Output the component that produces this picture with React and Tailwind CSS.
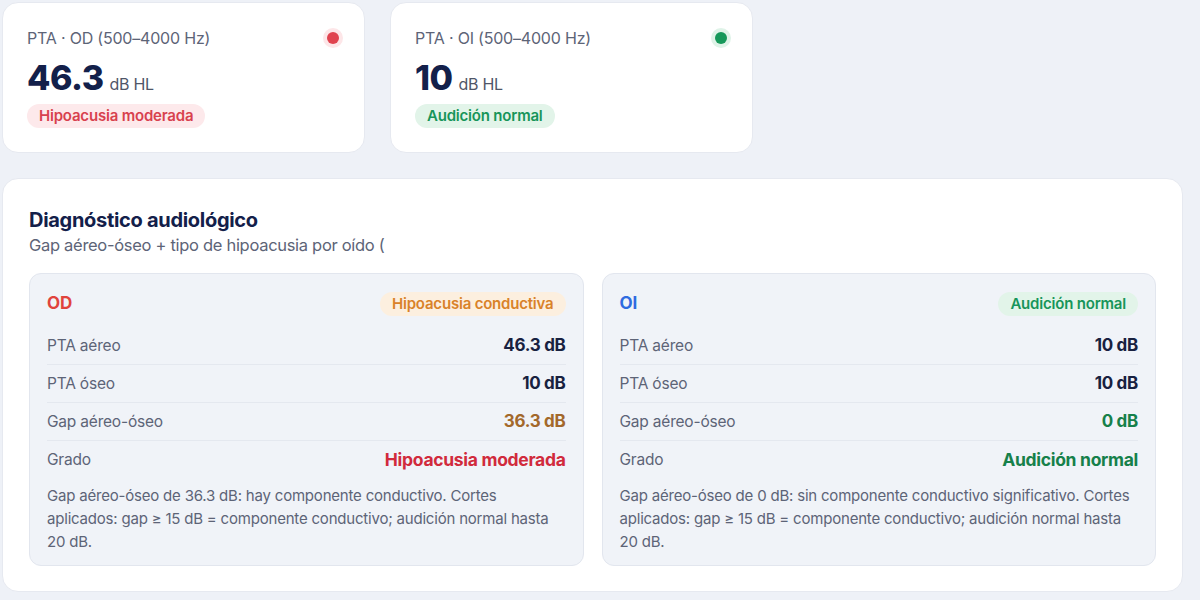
import React from "react";

const font = { fontFamily: "Inter, 'Noto Sans', sans-serif" };

function TopCard({ label, value, badge, tone }) {
  const dot = tone === "red" ? "bg-[#e0434f] ring-[#fde6e8]" : "bg-[#16985a] ring-[#dff3e8]";
  const badgeCls = tone === "red" ? "bg-[#fde9eb] text-[#d8414e]" : "bg-[#e2f4e9] text-[#17955a]";
  return (
    <div className="w-[363px] h-[151px] bg-white rounded-[16px] border border-[#e6e9f0] pl-6 pr-[21px] pt-[24px] flex flex-col">
      <div className="flex items-center justify-between">
        <span className="text-[16px] leading-[22px] text-[#5d6477] tracking-[-0.2px]">{label}</span>
        <span className="w-5 h-5 flex items-center justify-center">
          <span className={`w-3 h-3 rounded-full ring-4 ${dot}`} />
        </span>
      </div>
      <div className="flex items-baseline gap-[6px] mt-[11px]">
        <span className="text-[34px] leading-[36px] font-extrabold text-[#13204a] tracking-[-0.5px]">{value}</span>
        <span className="text-[16px] text-[#4f5668] tracking-[-0.3px]">dB HL</span>
      </div>
      <div className="mt-[7px]">
        <span className={`inline-flex items-center h-6 px-3 rounded-full text-[15px] font-semibold tracking-[-0.2px] ${badgeCls}`}>{badge}</span>
      </div>
    </div>
  );
}

function Row({ label, value, valueCls, last }) {
  return (
    <div className={`flex items-center justify-between h-[38px] ${last ? "" : "border-b border-[#e4e8ef]"}`}>
      <span className="text-[15.5px] text-[#5d6477] tracking-[-0.2px]">{label}</span>
      <span className={`font-bold tracking-[-0.3px] ${valueCls}`}>{value}</span>
    </div>
  );
}

function Panel({ ear, earCls, badge, badgeCls, rows, note }) {
  return (
    <div className="flex-1 bg-[#f0f3f8] border border-[#e2e6ee] rounded-[12px] px-[17px] pt-[18px] pb-[12px]">
      <div className="flex items-center justify-between h-[24px] mb-[11px]">
        <span className={`text-[17px] font-bold ${earCls}`}>{ear}</span>
        <span className={`inline-flex items-center h-6 px-3 rounded-full text-[15px] font-semibold tracking-[-0.2px] ${badgeCls}`}>{badge}</span>
      </div>
      {rows.map((r, i) => (
        <Row key={i} {...r} last={i === rows.length - 1} />
      ))}
      <p className="mt-[5px] text-[15px] leading-[23px] text-[#5d6477] tracking-[-0.2px]">{note}</p>
    </div>
  );
}

export default function App() {
  return (
    <div className="w-[1200px] h-[600px] bg-[#eef1f7] overflow-hidden pl-[2px] pt-[2px] pr-[17px]" style={font}>
      <div className="flex gap-[25px]">
        <TopCard label="PTA · OD (500–4000 Hz)" value="46.3" badge="Hipoacusia moderada" tone="red" />
        <TopCard label="PTA · OI (500–4000 Hz)" value="10" badge="Audición normal" tone="green" />
      </div>
      <div className="mt-[25px] bg-white rounded-[16px] border border-[#e6e9f0] px-[26px] pt-[29px] pb-[25px]">
        <h2 className="text-[20px] leading-[24px] font-bold text-[#13204a] tracking-[-0.3px]">Diagnóstico audiológico</h2>
        <p className="text-[16.5px] leading-[24px] text-[#5d6477] tracking-[-0.3px] mt-[1px]">Gap aéreo-óseo + tipo de hipoacusia por oído (</p>
        <div className="flex gap-[18px] mt-[16px]">
          <Panel
            ear="OD"
            earCls="text-[#e0433d]"
            badge="Hipoacusia conductiva"
            badgeCls="bg-[#fcefdf] text-[#d98229]"
            rows={[
              { label: "PTA aéreo", value: "46.3 dB", valueCls: "text-[17px] text-[#182140]" },
              { label: "PTA óseo", value: "10 dB", valueCls: "text-[17px] text-[#182140]" },
              { label: "Gap aéreo-óseo", value: "36.3 dB", valueCls: "text-[17px] text-[#a3682b]" },
              { label: "Grado", value: "Hipoacusia moderada", valueCls: "text-[17.5px] text-[#d12a3c]" },
            ]}
            note="Gap aéreo-óseo de 36.3 dB: hay componente conductivo. Cortes aplicados: gap ≥ 15 dB = componente conductivo; audición normal hasta 20 dB."
          />
          <Panel
            ear="OI"
            earCls="text-[#2f6be0]"
            badge="Audición normal"
            badgeCls="bg-[#e2f4e9] text-[#17955a]"
            rows={[
              { label: "PTA aéreo", value: "10 dB", valueCls: "text-[17px] text-[#182140]" },
              { label: "PTA óseo", value: "10 dB", valueCls: "text-[17px] text-[#182140]" },
              { label: "Gap aéreo-óseo", value: "0 dB", valueCls: "text-[17px] text-[#16804a]" },
              { label: "Grado", value: "Audición normal", valueCls: "text-[17.5px] text-[#16804a]" },
            ]}
            note="Gap aéreo-óseo de 0 dB: sin componente conductivo significativo. Cortes aplicados: gap ≥ 15 dB = componente conductivo; audición normal hasta 20 dB."
          />
        </div>
      </div>
    </div>
  );
}
